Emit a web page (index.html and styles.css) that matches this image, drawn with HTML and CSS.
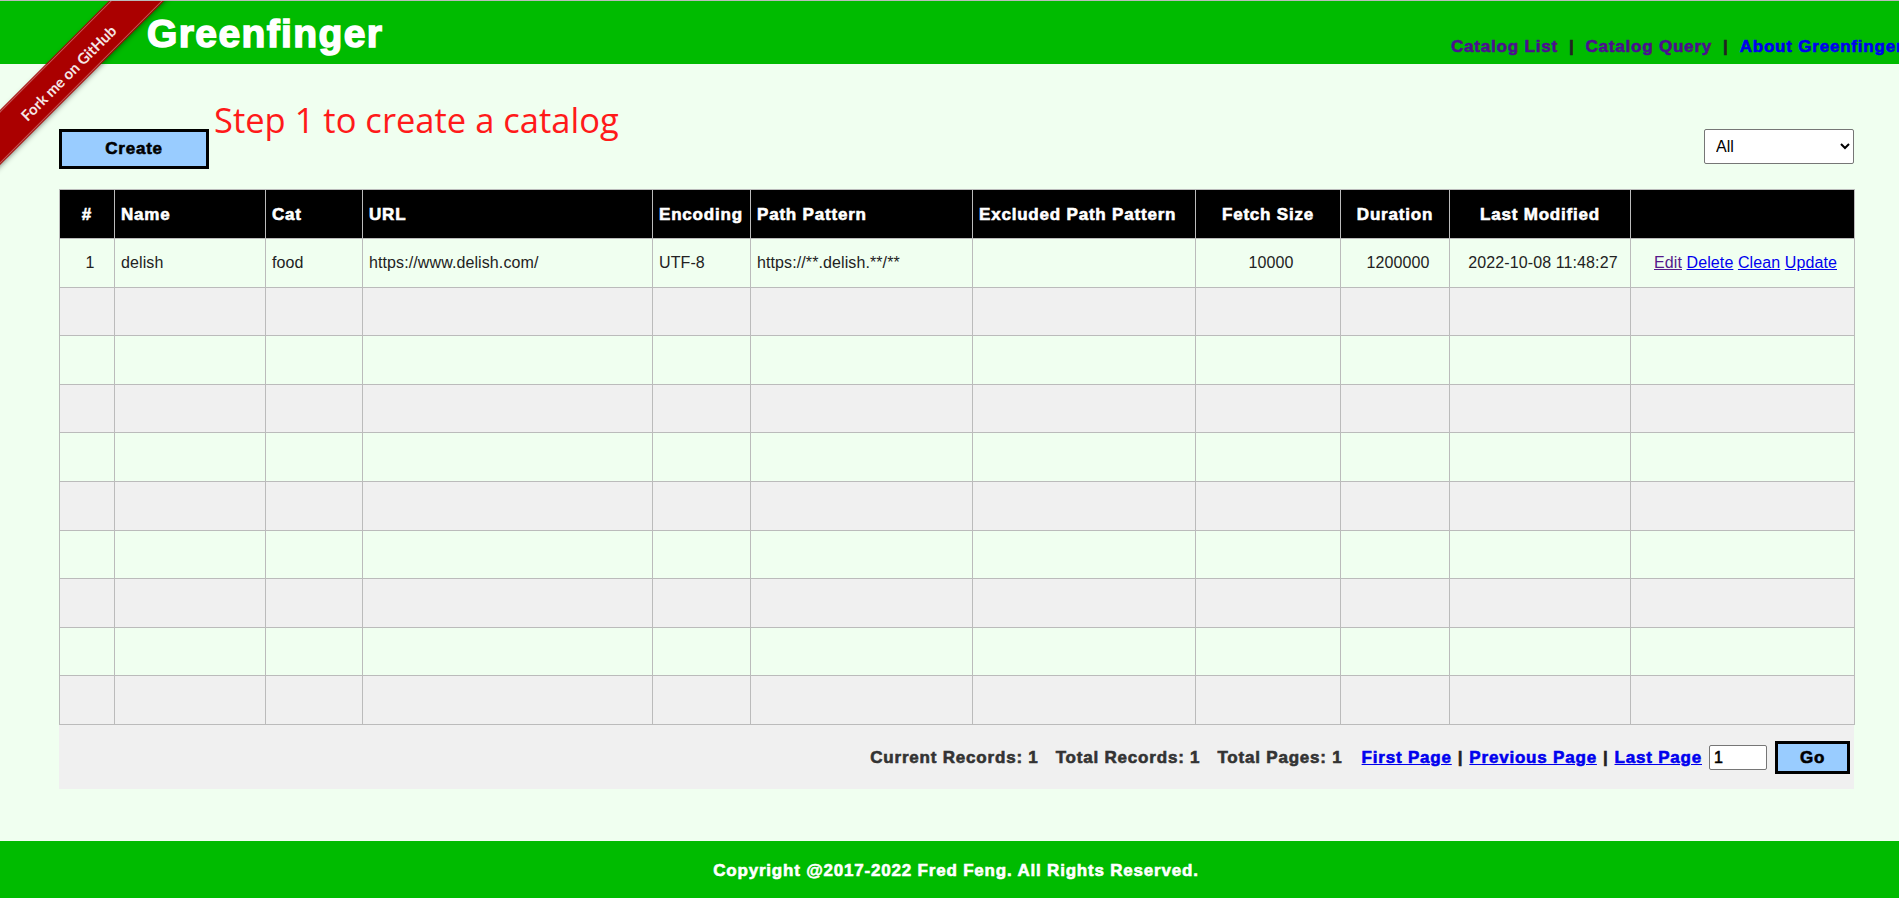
FILE: index.html
```html
<!DOCTYPE html>
<html lang="en">
<head>
  <meta charset="UTF-8">
  <meta name="viewport" content="width=device-width, initial-scale=1.0">
  <title>Greenfinger</title>
  <link rel="stylesheet" href="styles.css">
</head>
<body>
  <div class="ribbon-clip">
    <a class="ribbon" href="#">Fork me on GitHub</a>
  </div>
  <header class="top-bar">
    <h1 class="logo">Greenfinger</h1>
    <nav class="top-nav">
      <a class="seen" href="#">Catalog List</a><span class="nav-sep">|</span><a class="seen" href="#">Catalog Query</a><span class="nav-sep">|</span><a href="#">About Greenfinger</a>
    </nav>
  </header>
  <main class="content">
    <div class="toolbar">
      <button class="btn btn-create" type="button">Create</button>
      <span class="step-tip">Step 1 to create a catalog</span>
      <select class="cat-select">
        <option>All</option>
      </select>
    </div>
    <table class="catalog-table">
      <colgroup>
        <col class="col-id"><col class="col-name"><col class="col-cat"><col class="col-url"><col class="col-enc"><col class="col-path"><col class="col-excl"><col class="col-size"><col class="col-dur"><col class="col-date"><col class="col-act">
      </colgroup>
      <thead>
        <tr>
          <th>#</th>
          <th class="left">Name</th>
          <th class="left">Cat</th>
          <th class="left">URL</th>
          <th class="left">Encoding</th>
          <th class="left">Path Pattern</th>
          <th class="left">Excluded Path Pattern</th>
          <th>Fetch Size</th>
          <th>Duration</th>
          <th>Last Modified</th>
          <th></th>
        </tr>
      </thead>
      <tbody>
        <tr>
          <td class="center">1</td>
          <td>delish</td>
          <td>food</td>
          <td>https://www.delish.com/</td>
          <td>UTF-8</td>
          <td>https://**.delish.**/**</td>
          <td></td>
          <td class="center">10000</td>
          <td class="center">1200000</td>
          <td class="center">2022-10-08 11:48:27</td>
          <td class="center"><a class="seen-link" href="#">Edit</a> <a href="#">Delete</a> <a href="#">Clean</a> <a href="#">Update</a></td>
        </tr>
        <tr><td></td><td></td><td></td><td></td><td></td><td></td><td></td><td></td><td></td><td></td><td></td></tr>
        <tr><td></td><td></td><td></td><td></td><td></td><td></td><td></td><td></td><td></td><td></td><td></td></tr>
        <tr><td></td><td></td><td></td><td></td><td></td><td></td><td></td><td></td><td></td><td></td><td></td></tr>
        <tr><td></td><td></td><td></td><td></td><td></td><td></td><td></td><td></td><td></td><td></td><td></td></tr>
        <tr><td></td><td></td><td></td><td></td><td></td><td></td><td></td><td></td><td></td><td></td><td></td></tr>
        <tr><td></td><td></td><td></td><td></td><td></td><td></td><td></td><td></td><td></td><td></td><td></td></tr>
        <tr><td></td><td></td><td></td><td></td><td></td><td></td><td></td><td></td><td></td><td></td><td></td></tr>
        <tr><td></td><td></td><td></td><td></td><td></td><td></td><td></td><td></td><td></td><td></td><td></td></tr>
        <tr><td></td><td></td><td></td><td></td><td></td><td></td><td></td><td></td><td></td><td></td><td></td></tr>
      </tbody>
    </table>
    <div class="pager">
      <span class="pager-stat">Current Records: 1</span>
      <span class="pager-stat">Total Records: 1</span>
      <span class="pager-stat pager-stat-last">Total Pages: 1</span>
      <a href="#">First Page</a><span class="pager-sep">|</span><a href="#">Previous Page</a><span class="pager-sep">|</span><a href="#">Last Page</a>
      <input class="page-input" type="text" value="1">
      <button class="btn btn-go" type="button">Go</button>
    </div>
  </main>
  <footer class="bottom-bar">Copyright @2017-2022 Fred Feng. All Rights Reserved.</footer>
</body>
</html>
```

FILE: styles.css
```css
:root {
  --green: #00bb00;
  --page-bg: #f0fff0;
  --stripe: #f0f0f0;
  --line: #bbbbbb;
  --btn-bg: #99ccff;
}
html, body {
  margin: 0;
  padding: 0;
  overflow: hidden;
}
body {
  font-family: "Liberation Sans", Arial, sans-serif;
  font-size: 16px;
  color: #222;
  background-color: var(--page-bg);
  border-top: 1px solid #bbbbbb;
}

/* 粗体文字 */
.top-nav,
.btn,
.catalog-table th,
.pager,
.bottom-bar {
  font-family: "Liberation Sans", Arial, sans-serif;
  font-size: 17px;
  font-weight: 700;
  letter-spacing: 0.8px;
  -webkit-text-stroke: 0.6px;
}

/* 顶部 */
.top-bar {
  display: flex;
  height: 63px;
  background-color: var(--green);
}
.logo {
  flex: 1;
  margin: 0;
  padding-left: 147px;
  font-size: 39px;
  font-weight: 700;
  line-height: 66px;
  letter-spacing: 1.4px;
  -webkit-text-stroke: 1.5px;
  color: #fff;
}
.top-nav {
  flex: 0 0 448px;
  padding-top: 36px;
  overflow: hidden;
  white-space: nowrap;
  line-height: 20px;
}
.top-nav a {
  color: #0000ee;
  text-decoration: none;
}
.top-nav a.seen {
  color: #4b0f8f;
}
.nav-sep {
  margin: 0 11px;
  color: #222;
}

/* 丝带 */
.ribbon-clip {
  position: absolute;
  top: 1px;
  left: 0;
  width: 180px;
  height: 180px;
  overflow: hidden;
}
.ribbon {
  position: absolute;
  top: 50px;
  left: -82px;
  width: 300px;
  height: 37px;
  box-sizing: border-box;
  padding-right: 4px;
  border-top: 1px solid #c45a5a;
  border-bottom: 1px solid #c45a5a;
  outline: 1px solid #a00;
  background-color: #a00;
  transform: rotate(-45deg);
  box-shadow: 0 2px 5px rgba(0, 0, 0, 0.45);
  font-family: Lato, sans-serif;
  font-size: 15px;
  font-weight: 700;
  line-height: 40px;
  text-align: center;
  color: #f4e6e6;
  text-decoration: none;
}

/* 工具栏 */
.content {
  padding: 0 45px 0 59px;
}
.toolbar {
  display: flex;
  align-items: flex-start;
  height: 125px;
}
.btn {
  border: 3px solid #000;
  background-color: var(--btn-bg);
  color: #000;
  padding: 0;
}
.btn-create {
  width: 150px;
  height: 40px;
  margin-top: 65px;
}
.step-tip {
  margin: 33px 0 0 5px;
  font-family: "Open Sans", sans-serif;
  font-size: 34.5px;
  line-height: 46px;
  color: #ff1a1a;
}
.cat-select {
  width: 150px;
  height: 35px;
  margin: 65px 0 0 auto;
  padding: 0 7px;
  font-family: "Liberation Sans", Arial, sans-serif;
  font-size: 16px;
  background-color: #fff;
  border: 1px solid #767676;
  border-radius: 2px;
}

/* 表格 */
.catalog-table {
  width: 1795px;
  table-layout: fixed;
  border-collapse: collapse;
}
.col-id { width: 55px; }
.col-name { width: 151px; }
.col-cat { width: 97px; }
.col-url { width: 290px; }
.col-enc { width: 98px; }
.col-path { width: 222px; }
.col-excl { width: 223px; }
.col-size { width: 145px; }
.col-dur { width: 109px; }
.col-date { width: 181px; }
.col-act { width: 224px; }
.catalog-table th,
.catalog-table td {
  padding: 0 6px;
  border: 1px solid var(--line);
  overflow: hidden;
  white-space: nowrap;
}
.catalog-table th {
  height: 46px;
  padding-top: 2px;
  background-color: #000;
  color: #fff;
  text-align: center;
}
.catalog-table th.left {
  text-align: left;
}
.catalog-table td {
  height: 47.6px;
  letter-spacing: 0.1px;
  text-align: left;
}
.catalog-table td.center {
  padding: 0 3px 0 9px;
  text-align: center;
}
.catalog-table tbody tr:nth-child(even) td {
  background-color: var(--stripe);
}
.catalog-table a {
  color: #0000ee;
}
.catalog-table a.seen-link {
  color: #551a8b;
}

/* 分页 */
.pager {
  display: flex;
  justify-content: flex-end;
  align-items: center;
  box-sizing: border-box;
  height: 64px;
  padding: 2px 4px 0 0;
  background-color: var(--stripe);
  color: #333;
}
.pager a {
  color: #0000ee;
}
.pager-stat {
  margin-right: 17px;
}
.pager-stat-last {
  margin-right: 19px;
}
.pager-sep {
  margin: 0 6px;
  color: #222;
}
.page-input {
  width: 58px;
  height: 25px;
  box-sizing: border-box;
  margin: 0 8px 0 7px;
  padding: 0 4px;
  font-family: "Liberation Sans", Arial, sans-serif;
  font-size: 16px;
  border: 1px solid #767676;
  border-radius: 2px;
}
.btn-go {
  width: 75px;
  height: 33px;
}

/* 底部 */
.bottom-bar {
  margin-top: 52px;
  padding-left: 13px;
  height: 57px;
  background-color: var(--green);
  line-height: 59px;
  text-align: center;
  color: #fff;
}
```
